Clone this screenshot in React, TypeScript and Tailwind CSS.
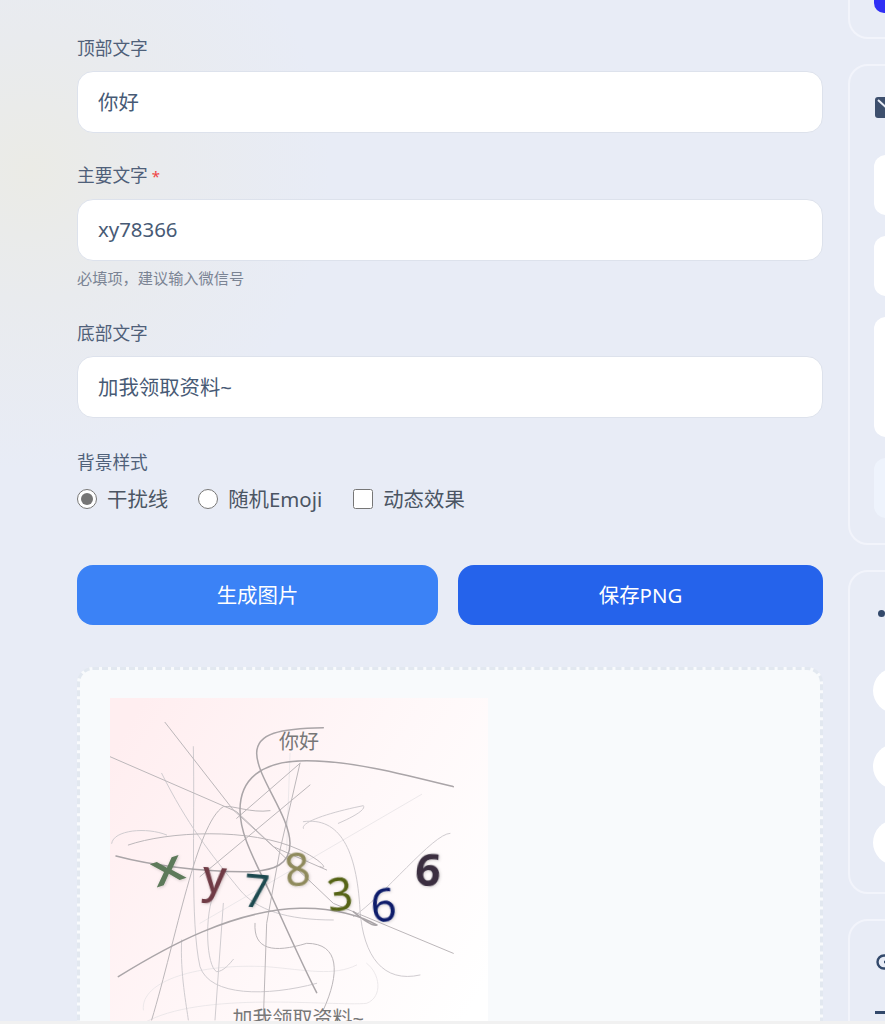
import React from "react";

const font = "font-['Noto_Sans','Noto_Sans_CJK_SC',sans-serif]";

function Field({ label, value, required, hint }: { label: string; value: string; required?: boolean; hint?: string }) {
  return (
    <div className="flex flex-col">
      <label className="text-[17.7px] leading-[24px] text-[#4f6079]">
        {label}
        {required && <span className="text-[15px] text-[#ef4444]"> *</span>}
      </label>
      <input
        readOnly
        defaultValue={value}
        className="mt-[11px] h-[62px] w-full rounded-2xl border border-[#dde2ec] bg-white px-5 pb-[3px] text-[20.4px] text-[#475a75] outline-none"
      />
      {hint && <p className="mt-[6px] text-[15.2px] leading-[22px] text-[#7b8494]">{hint}</p>}
    </div>
  );
}

function Captcha() {
  const thick = "#aaa5a8";
  const mid = "#bcb7ba";
  const thin = "#d0ccd0";
  const faint = "#e8e4e7";
  return (
    <svg viewBox="30 24 1134 1134" className="h-[378px] w-[378px] shrink-0" fontFamily="'Noto Sans','Noto Sans CJK SC',sans-serif">
      <defs>
        <linearGradient id="bgGrad" x1="0" y1="0.15" x2="1" y2="0.75">
          <stop offset="0" stopColor="#ffeef0" />
          <stop offset="0.55" stopColor="#fff8f9" />
          <stop offset="1" stopColor="#ffffff" />
        </linearGradient>
        <filter id="soft" x="-30%" y="-30%" width="160%" height="160%">
          <feGaussianBlur in="SourceGraphic" stdDeviation="1.2" result="b" />
          <feDropShadow in="b" dx="2" dy="2" stdDeviation="4" floodColor="#000" floodOpacity="0.2" />
        </filter>
      </defs>
      <rect x="30" y="24" width="1134" height="1134" fill="url(#bgGrad)" />
      <g fill="none" strokeLinecap="round">
        <g stroke={faint} strokeWidth="2.5">
          <path d="M130 960 C120 870 300 820 500 830 C620 840 700 860 770 825" />
          <path d="M130 1000 C300 900 700 950 800 940 C850 920 840 850 800 820" />
          <path d="M965 313 L300 700" />
          <path d="M570 190 L560 480" />
        </g>
        <g stroke={thin} strokeWidth="3">
          <path d="M35 460 C40 420 140 410 200 435" />
          <path d="M610 395 C720 380 770 480 780 660 C790 800 850 880 960 855" />
          <path d="M1050 430 C1000 430 850 620 760 680" />
          <path d="M345 600 C310 680 320 830 350 845 C370 845 390 820 400 808" />
          <path d="M370 640 L345 990" />
          <path d="M245 750 C240 850 260 950 265 990" />
          <path d="M280 170 C285 400 270 700 300 830 C330 920 500 920 650 880" />
          <path d="M185 250 C260 400 330 490 420 600 C470 660 560 690 700 690" />
          <path d="M610 415 C600 395 700 365 790 347 C800 360 750 385 715 400" />
        </g>
        <g stroke={mid} strokeWidth="3">
          <path d="M195 97 L400 360 L520 470 L680 540" />
          <path d="M30 200 L410 365 L700 640 L1060 790" />
          <path d="M600 220 L540 480 L500 700 L490 990" />
          <path d="M410 385 L600 220" />
          <path d="M630 285 L300 560" />
          <path d="M85 465 C200 425 450 410 600 480 C680 520 680 540 660 530" />
          <path d="M465 700 C460 780 520 790 620 760 C720 760 720 850 670 960" />
          <path d="M155 990 C230 740 290 400 370 350 C400 345 450 370 510 362" />
        </g>
        <g stroke={thick} strokeWidth="4.5">
          <path d="M48 498 C150 525 300 545 430 545 C530 545 570 520 570 460 C570 380 470 260 470 190 C470 130 540 115 670 113" />
          <path d="M1060 290 C900 250 750 212 620 212 C480 212 420 270 420 360 C420 440 470 520 520 630 C570 740 610 830 650 908" />
          <path d="M55 860 C200 770 400 660 600 655 C700 652 790 680 830 705 C820 710 790 690 760 665" />
        </g>
      </g>
      <text x="597" y="176" textAnchor="middle" fontSize="60" fill="#777">你好</text>
      <text x="595" y="1008" textAnchor="middle" fontSize="60" fill="#777">加我领取资料~</text>
      <g fontSize="135" filter="url(#soft)" textAnchor="middle">
        <text transform="translate(215 578) rotate(-18) scale(1.35 1)" fill="#5d7a5a" fontWeight="500">x</text>
        <text transform="translate(340 608) rotate(4)" fill="#6f3b45" fontWeight="500">y</text>
        <text transform="translate(465 652) rotate(5)" fill="#1f4a50">7</text>
        <text transform="translate(597 588) rotate(-6)" fill="#8f8a5c">8</text>
        <text transform="translate(725 662) rotate(-6)" fill="#566419">3</text>
        <text transform="translate(855 695) rotate(-6)" fill="#0a1a6a">6</text>
        <text transform="translate(980 588) rotate(5)" fill="#3a2f40" fontWeight="700">6</text>
      </g>
    </svg>
  );
}

function Card({ className, children }: { className: string; children?: React.ReactNode }) {
  return <div className={`shrink-0 rounded-[20px] border-2 border-[#f2f4fb] ${className}`}>{children}</div>;
}

export default function App() {
  return (
    <div className={`relative flex h-[1024px] w-[885px] overflow-hidden bg-[#e8ecf6] bg-[radial-gradient(circle_at_30px_170px,#ebebe6_0,#e9ebee_130px,#e8ecf6_300px)] ${font}`}>
      <main className="ml-[77px] flex w-[746px] shrink-0 flex-col pt-[36px]">
        <Field label="顶部文字" value="你好" />
        <div className="mt-[30px]">
          <Field label="主要文字" value="xy78366" required hint="必填项，建议输入微信号" />
        </div>
        <div className="mt-[32px]">
          <Field label="底部文字" value="加我领取资料~" />
        </div>
        <div className="mt-[32px] text-[17.7px] leading-[24px] text-[#4f6079]">背景样式</div>
        <div className="mt-[10px] flex h-[30px] items-center text-[20.4px] text-[#4b5563]">
          <label className="flex items-center">
            <input type="radio" name="bg" defaultChecked className="m-0 h-5 w-5 accent-[#757575]" />
            <span className="ml-[10px]">干扰线</span>
          </label>
          <label className="ml-[30px] flex items-center">
            <input type="radio" name="bg" className="m-0 h-5 w-5 accent-[#757575]" />
            <span className="ml-[10px]">随机Emoji</span>
          </label>
          <label className="ml-[31px] flex items-center">
            <input type="checkbox" className="m-0 h-5 w-5 accent-[#757575]" />
            <span className="ml-[10px]">动态效果</span>
          </label>
        </div>
        <div className="mt-[51px] flex shrink-0 gap-5">
          <button className="h-[60px] w-[361px] rounded-2xl bg-[#3b82f6] text-[20.4px] text-white">生成图片</button>
          <button className="h-[60px] flex-1 rounded-2xl bg-[#2563eb] text-[20.4px] text-white">保存PNG</button>
        </div>
        <div className="mt-[42px] h-[420px] shrink-0 rounded-2xl border-[3px] border-dashed border-[#e2e8f0] bg-[#f8fafc] pl-[30px] pt-[28px]">
          <Captcha />
        </div>
      </main>

      <aside className="ml-[25px] flex w-[360px] shrink-0 flex-col gap-[25px]">
        <Card className="h-[39px] rounded-t-none border-t-0">
          <div className="ml-[24px] h-[13px] w-[60px] rounded-bl-[10px] bg-[#2f2ff5]" />
        </Card>
        <Card className="h-[481px] pl-[25px] pt-[31px]">
          <svg viewBox="0 0 26 21" className="h-[21px] w-[26px]">
            <rect width="26" height="21" rx="3" fill="#3d4f6d" />
            <path d="M3 3 L13 12 L23 3" fill="none" stroke="#e8ecf6" strokeWidth="2" />
          </svg>
          <div className="-ml-[1px] mt-[37px] flex flex-col gap-[21px]">
            <div className="h-[60px] rounded-xl bg-white" />
            <div className="h-[60px] rounded-xl bg-white" />
            <div className="h-[120px] rounded-xl bg-white" />
            <div className="h-[60px] rounded-xl bg-[#eef3fc]" />
          </div>
        </Card>
        <Card className="h-[324px] pl-[23px] pt-[38px]">
          <div className="ml-[5px] h-[7px] w-[7px] rounded-full bg-[#33496b]" />
          <div className="mt-[51px] flex flex-col gap-[31px]">
            <div className="h-[45px] rounded-full bg-white" />
            <div className="h-[45px] rounded-full bg-white" />
            <div className="h-[45px] rounded-full bg-white" />
          </div>
        </Card>
        <Card className="h-[200px] pl-[25px] pt-[33px]">
          <svg viewBox="0 0 20 16" className="h-[16px] w-[20px]">
            <circle cx="9" cy="8" r="6.5" fill="none" stroke="#33496b" strokeWidth="2.4" />
            <path d="M9 8 H16" stroke="#33496b" strokeWidth="2.4" />
          </svg>
          <div className="mt-[41px] h-[3px] w-[40px] bg-[#33496b]" />
        </Card>
      </aside>

      <div className="absolute bottom-0 left-0 h-[3px] w-full bg-[#f1f1f1]" />
    </div>
  );
}
